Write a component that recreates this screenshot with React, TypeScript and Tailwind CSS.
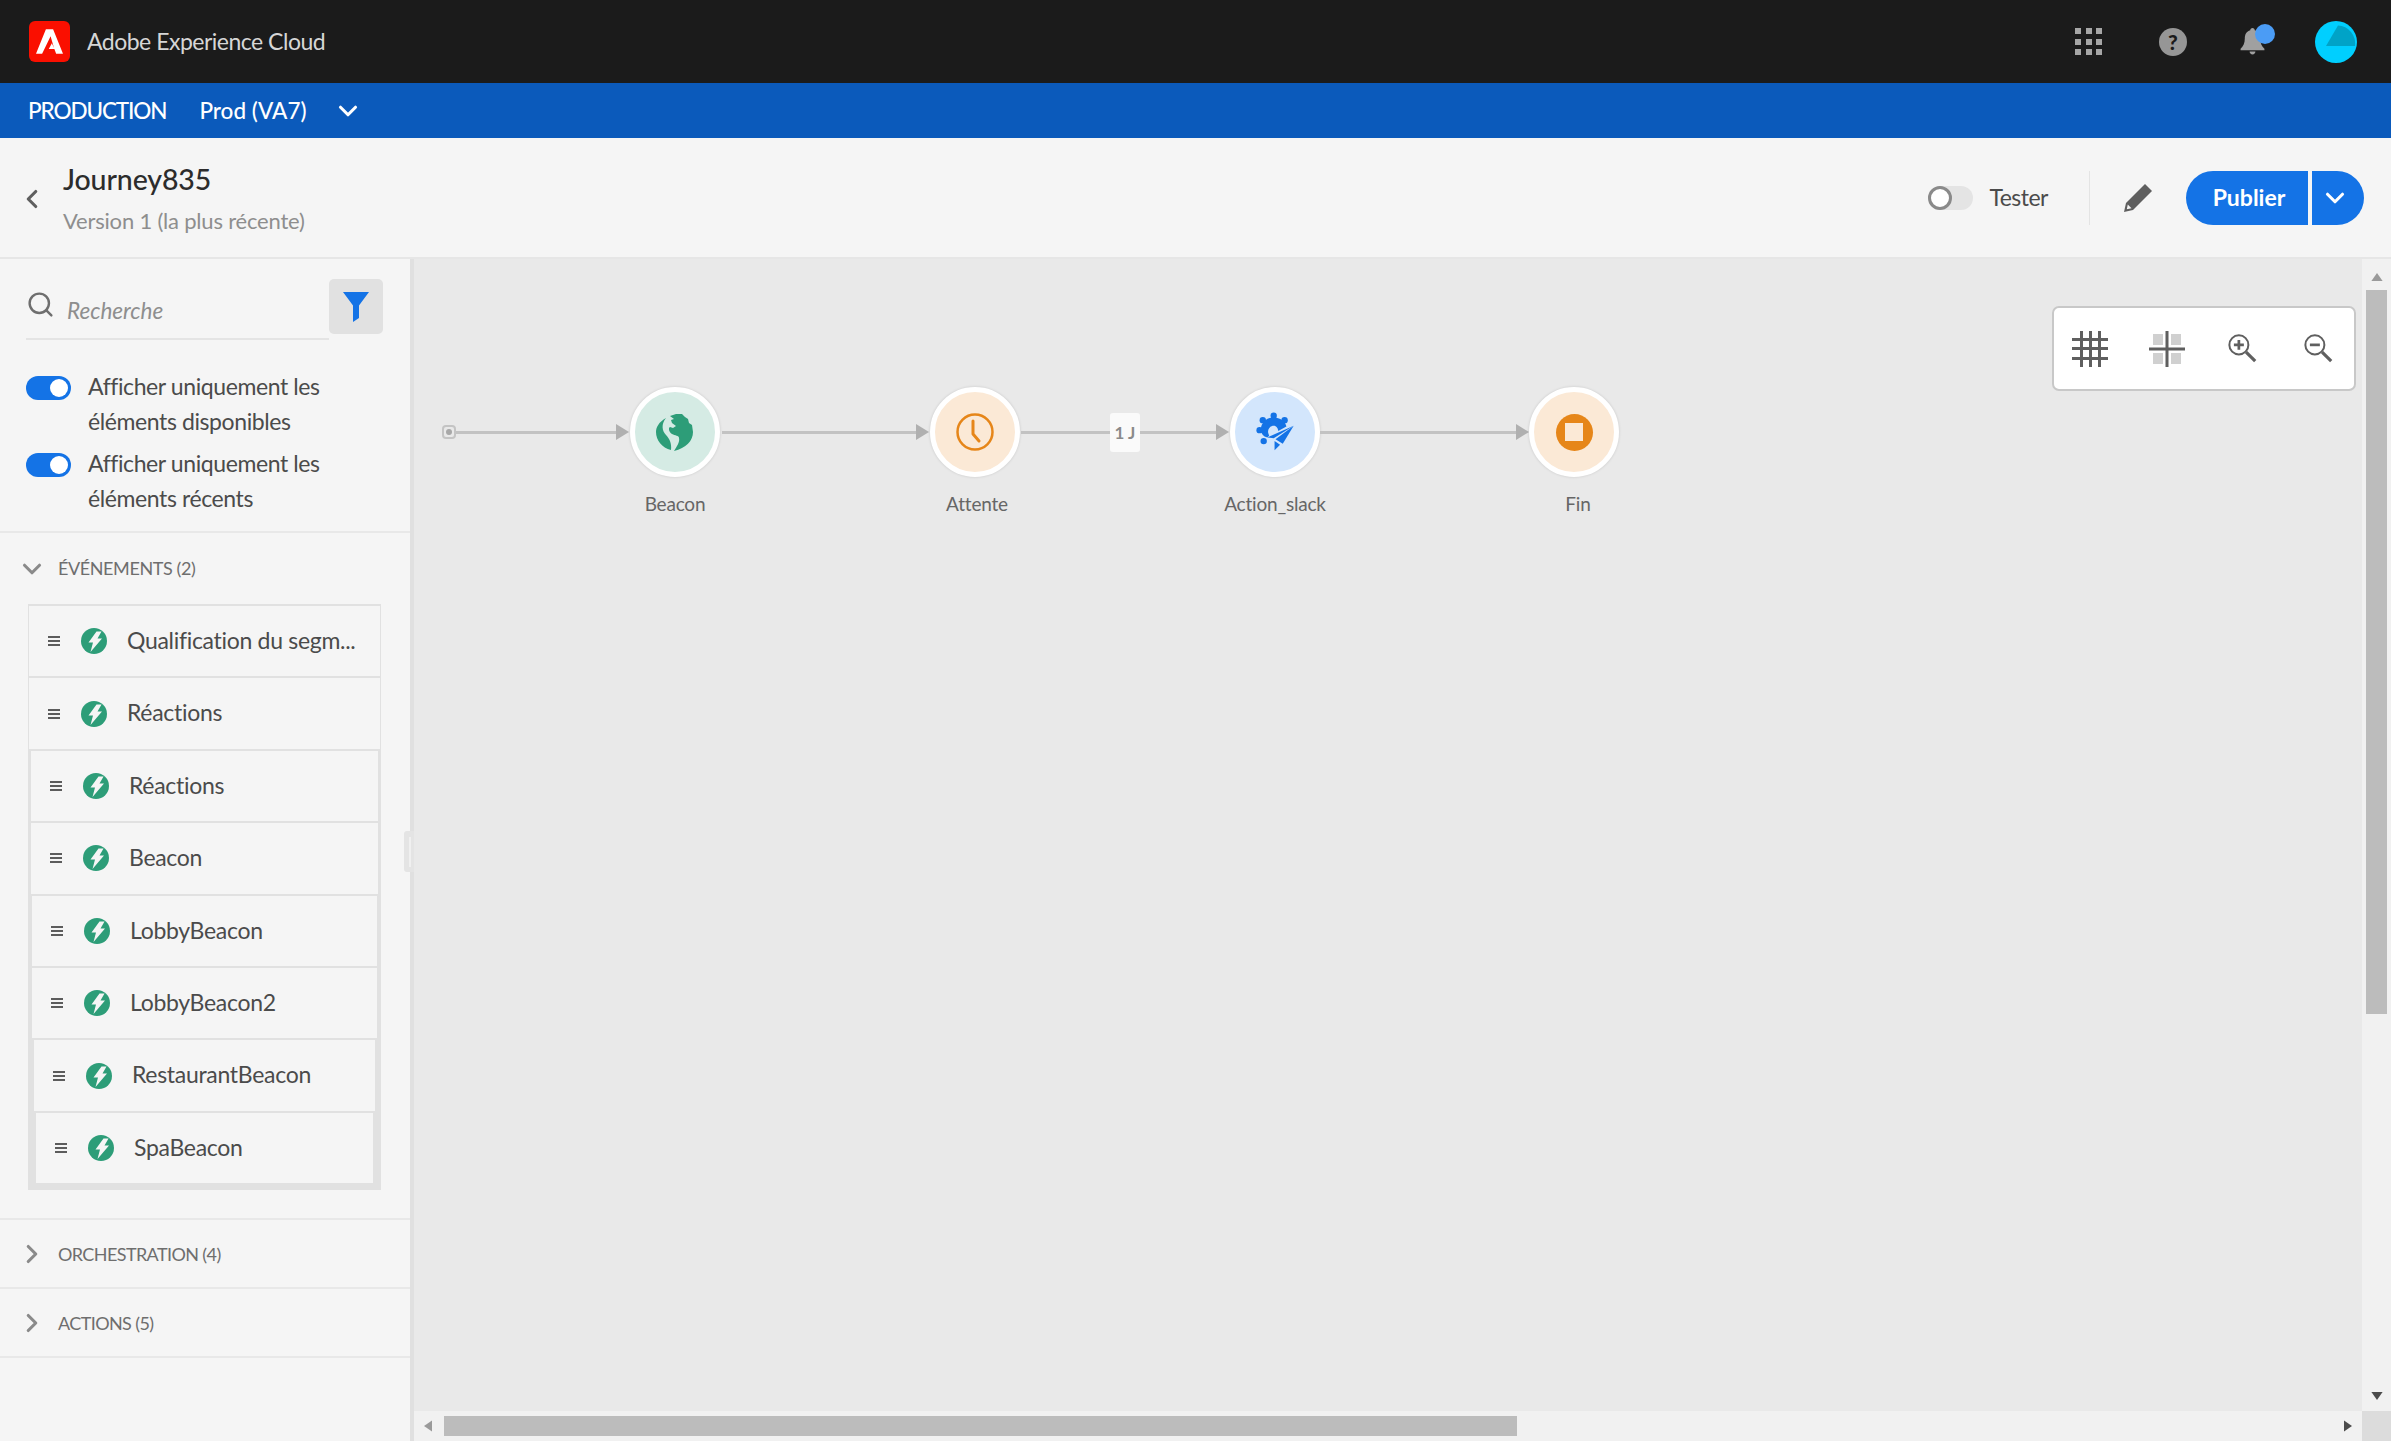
import { ChevronDown, ChevronLeft, ChevronRight, Search } from "lucide-react";

const font = "font-['Lato','Open_Sans',sans-serif]";

const events = [
  { name: "Qualification du segm...", cls: "mx-[1px]" },
  { name: "Réactions", cls: "mx-[1px]" },
  { name: "Réactions", cls: "mx-[3px]" },
  { name: "Beacon", cls: "mx-[3px]" },
  { name: "LobbyBeacon", cls: "mx-[4px]" },
  { name: "LobbyBeacon2", cls: "mx-[4px]" },
  { name: "RestaurantBeacon", cls: "mx-[6px]" },
  { name: "SpaBeacon", cls: "mx-[8px]" },
];

const AdobeLogo = () => (
  <div className="flex h-[41px] w-[41px] items-center justify-center rounded-[6px] bg-[#fa0f00]">
    <svg viewBox="0 0 30 27" className="h-[25px] w-[27px]" fill="#fff">
      <path d="M11 0h8l11 27h-7.600l-2-5.200h-6.200l3.400-6.400 2.400 5.200-3.800-13L6.800 27H0z" />
    </svg>
  </div>
);

const AppGrid = () => (
  <div className="grid grid-cols-3 gap-[4.500px]">
    {[0, 1, 2, 3, 4, 5, 6, 7, 8].map((i) => (
      <span key={i} className="h-[6px] w-[6px] bg-[#a6a6a6]" />
    ))}
  </div>
);

const HelpIcon = () => (
  <div className={`flex h-[28px] w-[28px] items-center justify-center rounded-full bg-[#969696] text-[21px] font-black leading-none text-[#1b1b1b] ${font}`}>
    ?
  </div>
);

const Bell = () => (
  <div className="relative h-[34px] w-[34px]">
    <svg viewBox="0 0 26 28" className="absolute left-[3px] top-[2px] h-[29px] w-[25px]" fill="#a0a0a0">
      <path d="M13 0c1.400 0 2.300 1 2.300 2.300 4 1.100 5.700 4.200 5.700 8.700 0 5 1.600 8 4.400 10.600V23H.6v-1.400C3.400 19 5 16 5 11c0-4.500 1.700-7.600 5.700-8.700C10.700 1 11.600 0 13 0z" />
      <path d="M10 24.500h6c0 1.800-1.300 3-3 3s-3-1.200-3-3z" />
    </svg>
    <span className="absolute left-[18px] top-[-1px] h-[20px] w-[20px] rounded-full bg-[#4b9cf5]" />
  </div>
);

const Avatar = () => (
  <svg viewBox="0 0 42 42" className="h-[42px] w-[42px]">
    <circle cx="21" cy="21" r="21" fill="#00cfff" />
    <path d="M23 4.500A18 18 0 0 1 40 25H11z" fill="#00a3c7" />
  </svg>
);

const Toggle = ({ on }: { on?: boolean }) => (
  <span className={`flex h-[24px] w-[45px] shrink-0 items-center rounded-full ${on ? "justify-end bg-[#1473e6] pr-[3px]" : "bg-[#e4e4e4]"}`}>
    {on ? (
      <span className="h-[18px] w-[18px] rounded-full bg-white" />
    ) : (
      <span className="h-[24px] w-[24px] rounded-full border-[3px] border-[#8a8a8a] bg-white" />
    )}
  </span>
);

const Bolt = () => (
  <svg viewBox="0 0 26 26" className="h-[26px] w-[26px] shrink-0">
    <circle cx="13" cy="13" r="13" fill="#2d9d78" />
    <path d="M15.500 3.500h5l-4 7h4.500L9.500 24l2.500-9.500H7.500z" fill="#f5f5f5" />
  </svg>
);

const Handle = () => (
  <span className="flex w-[12px] shrink-0 flex-col gap-[2px]">
    <span className="h-[2px] bg-[#5c5c5c]" />
    <span className="h-[2px] bg-[#5c5c5c]" />
    <span className="h-[2px] bg-[#5c5c5c]" />
  </span>
);

const SectionRow = ({ label }: { label: string }) => (
  <div className="flex h-[69px] items-center border-b-2 border-[#e8e8e8] pl-[17px]">
    <ChevronRight size={30} strokeWidth={2.500} className="text-[#8a8a8a]" />
    <span className="ml-[11px] mt-[2px] text-[18px] tracking-[-0.6px] text-[#6e6e6e]">{label}</span>
  </div>
);

const Sidebar = () => (
  <aside className="flex w-[410px] shrink-0 flex-col bg-[#f5f5f5]">
    <div className="flex h-[274px] flex-col border-b-2 border-[#e8e8e8] pl-[26px]">
      <div className="mt-[20px] flex items-start">
        <div className="flex h-[61px] w-[303px] items-center border-b-2 border-[#e4e4e4]">
          <Search size={29} strokeWidth={2} className="mb-[8px] text-[#6e6e6e]" />
          <span className="ml-[12px] mt-[5px] text-[22.500px] italic text-[#8e8e8e]">Recherche</span>
        </div>
        <div className="flex h-[55px] w-[54px] items-center justify-center rounded-[5px] bg-[#e1e1e1]">
          <svg viewBox="0 0 26 30" className="h-[30px] w-[26px]" fill="#1473e6">
            <path d="M0 0h26L16 13.500V26l-6 4V13.500z" />
          </svg>
        </div>
      </div>
      <div className="mt-[34px] flex items-start gap-[17px] text-[23px] leading-[35px] tracking-[-0.4px] text-[#4b4b4b]">
        <span className="mt-[2px]"><Toggle on /></span>
        <p className="-mt-[5px]">Afficher uniquement les<br />éléments disponibles</p>
      </div>
      <div className="mt-[12px] flex items-start gap-[17px] text-[23px] leading-[35px] tracking-[-0.4px] text-[#4b4b4b]">
        <span className="mt-[2px]"><Toggle on /></span>
        <p className="-mt-[5px]">Afficher uniquement les<br />éléments récents</p>
      </div>
    </div>
    <div className="flex h-[687px] flex-col border-b-2 border-[#e8e8e8] pl-[28px]">
      <div className="-ml-[11px] flex h-[71px] shrink-0 items-center">
        <ChevronDown size={30} strokeWidth={2.500} className="text-[#8a8a8a]" />
        <span className="ml-[11px] text-[18px] tracking-[-0.4px] text-[#6e6e6e]">ÉVÉNEMENTS (2)</span>
      </div>
      <div className="flex h-[586px] w-[353px] flex-col gap-[2px] bg-[#e1e1e1] pt-[2px]">
        {events.map((e, i) => (
          <div key={i} className={`flex h-[70.400px] shrink-0 items-center bg-[#f5f5f5] pl-[19px] ${e.cls}`}>
            <Handle />
            <span className="ml-[21px]"><Bolt /></span>
            <span className="mb-[2px] ml-[20px] text-[23px] tracking-[-0.3px] text-[#4b4b4b]">{e.name}</span>
          </div>
        ))}
      </div>
    </div>
    <SectionRow label="ORCHESTRATION (4)" />
    <SectionRow label="ACTIONS (5)" />
  </aside>
);

const Splitter = () => (
  <div className="relative w-[4px] shrink-0 bg-[#e0e0e0]">
    <div className="absolute left-[-6px] top-[572px] flex h-[41px] w-[17px] items-center justify-center gap-[3px] rounded-[3px] bg-[#e4e4e4]">
      <span className="h-[30px] w-[2px] bg-[#f0f0f0]" />
      <span className="h-[30px] w-[2px] bg-[#f0f0f0]" />
    </div>
  </div>
);

const GlobeIcon = () => (
  <svg viewBox="0 0 38 38" className="h-[38px] w-[38px]" fill="#2d9d78">
    <path d="M10 5C3 9 0 14 0 19c0 8 6 16 15 18 1-7-2-12-5-15C6 18 5 11 10 5z" />
    <path d="M14 3l6-2h6l3 3 3 2 1 4 3 2 1 7c0 9-7 16-19 19 3-5 6-9 5-13 0-3-4-2-7-4-3-2-4-6-2-7l3 1 3-2-4-3-1-3 3-1z" />
  </svg>
);

const ClockIcon = () => (
  <svg viewBox="0 0 38 38" className="h-[38px] w-[38px]" fill="none" stroke="#e68619">
    <circle cx="19" cy="19" r="17.500" strokeWidth="2.500" />
    <path d="M17 8v13l6 7" strokeWidth="3" strokeLinecap="round" strokeLinejoin="round" />
  </svg>
);

const ActionIcon = () => (
  <svg viewBox="0 0 42 44" className="h-[40px] w-[41px]" fill="#1473e6">
    <circle cx="19" cy="4" r="3.500" />
    <circle cx="7" cy="9" r="3.500" />
    <circle cx="31" cy="9" r="3.500" />
    <circle cx="3.500" cy="20" r="3.500" />
    <circle cx="8" cy="32" r="3.500" />
    <path d="M19 6c7 0 13 4 14 10l-9 5c0-3-2-6-5-6-4 0-7 4-6 8l1 3-2 2-3-1C6 25 5 22 5 19 5 12 11 6 19 6z" />
    <path d="M41 15 12 28l7 1z" />
    <path d="M41 15 21 30l8 5z" />
    <path d="M20 32v10l6-6z" />
  </svg>
);

const StopIcon = () => (
  <span className="flex h-[37px] w-[37px] items-center justify-center rounded-full bg-[#e68619]">
    <span className="h-[18px] w-[18px] bg-[#fbe9d6]" />
  </span>
);

const Node = ({ left, bg, children }: { left: string; bg: string; children: React.ReactNode }) => (
  <div className={`absolute top-[128px] flex h-[90px] w-[90px] items-center justify-center rounded-full border-[5px] border-white shadow-[0_0_3px_rgba(0,0,0,0.15)] ${left} ${bg}`}>
    {children}
  </div>
);

const Edge = ({ left, width }: { left: string; width: string }) => (
  <div className={`absolute top-[171.500px] h-[3px] bg-[#c2c2c2] ${left} ${width}`} />
);

const Arrow = ({ left }: { left: string }) => (
  <svg viewBox="0 0 13 16" className={`absolute top-[165px] h-[16px] w-[13px] ${left}`} fill="#b0b0b0">
    <path d="M0 0l13 8-13 8z" />
  </svg>
);

const Label = ({ left, text }: { left: string; text: string }) => (
  <span className={`absolute top-[231px] w-[160px] text-center text-[19px] tracking-[-0.2px] text-[#666666] ${left}`}>{text}</span>
);

const Toolbar = () => (
  <div className="absolute left-[1638px] top-[47px] flex h-[85px] w-[304px] items-center justify-between rounded-[7px] border-2 border-[#c8c8c8] bg-white px-[18px]">
    <svg viewBox="0 0 36 36" className="h-[36px] w-[36px]" fill="#5f5f5f">
      <path d="M8 0h3v36H8zM17 0h3v36h-3zM26 0h3v36h-3zM0 7h36v3H0zM0 16h36v3H0zM0 26h36v3H0z" />
    </svg>
    <svg viewBox="0 0 36 36" className="h-[36px] w-[36px]">
      <path d="M4 3h10v11H4zM22 3h10v11H22zM4 22h10v11H4zM22 22h10v11H22z" fill="#d0d0d0" />
      <path d="M16.500 0h3v36h-3zM0 16.500h36v3H0z" fill="#5f5f5f" />
    </svg>
    <svg viewBox="0 0 32 32" className="mx-[3px] h-[29px] w-[29px]" fill="none" stroke="#5f5f5f">
      <circle cx="12" cy="12" r="10.500" strokeWidth="2.200" />
      <path d="M20 20l10 10" strokeWidth="3.500" />
      <path d="M12 6.500v11M6.500 12h11" strokeWidth="3" />
    </svg>
    <svg viewBox="0 0 32 32" className="mx-[3px] h-[29px] w-[29px]" fill="none" stroke="#5f5f5f">
      <circle cx="12" cy="12" r="10.500" strokeWidth="2.200" />
      <path d="M20 20l10 10" strokeWidth="3.500" />
      <path d="M6.500 12h11" strokeWidth="3" />
    </svg>
  </div>
);

const Canvas = () => (
  <div className="relative min-w-0 flex-1 overflow-hidden bg-[#e9e9e9]">
    <span className="absolute left-[28px] top-[166px] flex h-[14px] w-[14px] items-center justify-center rounded-[4px] border-2 border-[#c4c4c4]">
      <span className="h-[6px] w-[6px] rounded-full bg-[#a8a8a8]" />
    </span>
    <Edge left="left-[42px]" width="w-[162px]" />
    <Arrow left="left-[202px]" />
    <Node left="left-[216px]" bg="bg-[#d5ebe4]"><GlobeIcon /></Node>
    <Edge left="left-[308px]" width="w-[195px]" />
    <Arrow left="left-[502px]" />
    <Node left="left-[516px]" bg="bg-[#fbe9d6]"><ClockIcon /></Node>
    <Edge left="left-[607px]" width="w-[98px]" />
    <span className="absolute left-[696px] top-[154px] flex h-[39px] w-[30px] items-center justify-center rounded-[3px] bg-[#fafafa] text-[17px] font-bold text-[#8a8a8a]">1 J</span>
    <Edge left="left-[726px]" width="w-[78px]" />
    <Arrow left="left-[802px]" />
    <Node left="left-[816px]" bg="bg-[#d3e6fc]"><ActionIcon /></Node>
    <Edge left="left-[906px]" width="w-[198px]" />
    <Arrow left="left-[1102px]" />
    <Node left="left-[1115px]" bg="bg-[#fbe9d6]"><StopIcon /></Node>
    <Label left="left-[181px]" text="Beacon" />
    <Label left="left-[483px]" text="Attente" />
    <Label left="left-[781px]" text="Action_slack" />
    <Label left="left-[1084px]" text="Fin" />
    <Toolbar />
  </div>
);

const Caret = ({ dir, dark }: { dir: "up" | "down" | "left" | "right"; dark?: boolean }) => {
  const paths = { up: "M0 10L7 0l7 10z", down: "M0 0h14L7 10z", left: "M10 0v14L0 7z", right: "M0 0l10 7-10 7z" };
  const box = dir === "up" || dir === "down" ? "0 0 14 10" : "0 0 10 14";
  const size = dir === "up" || dir === "down" ? "h-[8px] w-[12px]" : "h-[12px] w-[8px]";
  return (
    <svg viewBox={box} className={size} fill={dark ? "#4b4b4b" : "#9a9a9a"}>
      <path d={paths[dir]} />
    </svg>
  );
};

export default function App() {
  return (
    <div className={`flex h-[1441px] w-[2391px] flex-col overflow-hidden bg-[#f5f5f5] ${font}`}>
      <header className="flex h-[83px] shrink-0 items-center bg-[#1b1b1b] pl-[29px]">
        <AdobeLogo />
        <span className="ml-[17px] text-[23px] tracking-[-0.5px] text-[#d6d6d6]">Adobe Experience Cloud</span>
        <div className="ml-auto flex items-center">
          <AppGrid />
          <div className="ml-[57px]"><HelpIcon /></div>
          <div className="ml-[50px]"><Bell /></div>
          <div className="ml-[44px] mr-[34px]"><Avatar /></div>
        </div>
      </header>
      <div className="flex h-[55px] shrink-0 items-center bg-[#0b5abb] pl-[28px] text-[22.500px] font-medium text-white">
        <span className="tracking-[-1.100px]">PRODUCTION</span>
        <span className="ml-[33px]">Prod (VA7)</span>
        <ChevronDown size={30} strokeWidth={2.500} className="ml-[26px]" />
      </div>
      <div className="flex h-[121px] shrink-0 items-center border-b-2 border-[#e6e6e6] bg-[#f5f5f5] pl-[17px] pr-[27px]">
        <ChevronLeft size={30} strokeWidth={2.500} className="mt-[2px] text-[#5f5f5f]" />
        <div className="ml-[16px] flex flex-col">
          <span className="text-[28.500px] font-medium leading-[38px] tracking-[-0.1px] text-[#2c2c2c]">Journey835</span>
          <span className="mt-[8px] text-[22px] leading-[30px] tracking-[-0.2px] text-[#8e8e8e]">Version 1 (la plus récente)</span>
        </div>
        <div className="ml-auto flex items-center">
          <Toggle />
          <span className="ml-[16px] text-[23px] tracking-[-0.5px] text-[#4b4b4b]">Tester</span>
          <span className="ml-[41px] h-[54px] w-[1px] bg-[#e4e4e4]" />
          <svg viewBox="0 0 28 28" className="ml-[34px] h-[28px] w-[28px]" fill="#5f5f5f">
            <path d="M21 0l7 7L9 26l-9 2 2-9z" />
            <path d="M3.800 20.500l3.700 3.700-4.700 1z" fill="#f5f5f5" />
          </svg>
          <button className="ml-[34px] flex h-[54px] w-[122px] items-center justify-center rounded-l-full bg-[#1473e6] pl-[4px] text-[23px] font-bold text-white">Publier</button>
          <button className="ml-[4px] flex h-[54px] w-[52px] items-center justify-center rounded-r-full bg-[#1473e6] pr-[6px] text-white">
            <ChevronDown size={30} strokeWidth={2.500} />
          </button>
        </div>
      </div>
      <div className="flex min-h-0 flex-1">
        <Sidebar />
        <Splitter />
        <div className="flex min-w-0 flex-1 flex-col">
          <div className="flex min-h-0 flex-1">
            <Canvas />
            <div className="flex w-[29px] shrink-0 flex-col items-center bg-[#f1f1f1] pt-[14px]">
              <Caret dir="up" />
              <div className="mt-[9px] h-[724px] w-[21px] bg-[#bcbcbc]" />
              <div className="mt-auto mb-[11px]"><Caret dir="down" dark /></div>
            </div>
          </div>
          <div className="flex h-[30px] shrink-0 items-center bg-[#f1f1f1]">
            <div className="ml-[10px]"><Caret dir="left" /></div>
            <div className="ml-[12px] h-[20px] w-[1073px] bg-[#bcbcbc]" />
            <div className="ml-auto mr-[10px]"><Caret dir="right" dark /></div>
            <div className="h-[30px] w-[29px] bg-[#dcdcdc]" />
          </div>
        </div>
      </div>
    </div>
  );
}
